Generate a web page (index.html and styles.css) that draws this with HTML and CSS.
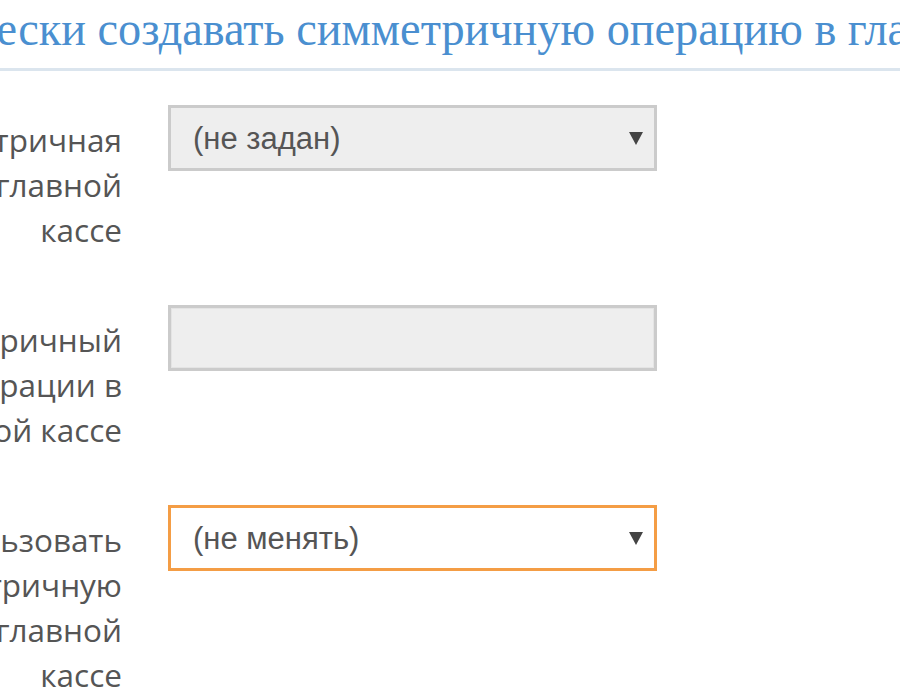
FILE: index.html
```html
<!DOCTYPE html>
<html lang="ru">
<head>
<meta charset="utf-8">
<title>Форма</title>
<link rel="stylesheet" href="styles.css">
</head>
<body>
<div class="page">
  <div class="header">
    <h1 class="title">Автоматически создавать симметричную операцию в главной кассе</h1>
  </div>
  <form class="form">
    <div class="row">
      <label class="label">Симметричная<br>операция в главной<br>кассе</label>
      <div class="control">
        <div class="select">
          <span class="value">(не задан)</span>
          <svg class="arrow" width="14" height="13" viewBox="0 0 14 13"><polygon points="0,0 14,0 7,13" fill="#444"/></svg>
        </div>
      </div>
    </div>
    <div class="row">
      <label class="label">Симметричный<br>номер операции в<br>главной кассе</label>
      <div class="control">
        <div class="input"></div>
      </div>
    </div>
    <div class="row">
      <label class="label">Использовать<br>симметричную<br>операцию в главной<br>кассе</label>
      <div class="control">
        <div class="select select-focus">
          <span class="value">(не менять)</span>
          <svg class="arrow" width="14" height="13" viewBox="0 0 14 13"><polygon points="0,0 14,0 7,13" fill="#444"/></svg>
        </div>
      </div>
    </div>
  </form>
</div>
</body>
</html>
```
FILE: styles.css
```css
html, body {
  margin: 0;
  padding: 0;
  background: #fff;
}
body {
  width: 900px;
  height: 700px;
  overflow: hidden;
}
.page {
  width: 900px;
}
.header {
  overflow: hidden;
  border-bottom: 3px solid #dbe5ee;
  padding: 1px 0 11px 0;
}
.title {
  margin: 0 0 0 -216px;
  white-space: nowrap;
  font-family: "Liberation Serif", "Times New Roman", serif;
  font-weight: normal;
  font-size: 48px;
  line-height: 56px;
  color: #4a8fd0;
  transform: scaleX(0.964);
  transform-origin: left center;
}
.form {
  padding-top: 34px;
}
.row {
  display: flex;
  align-items: flex-start;
  gap: 46px;
  margin-bottom: 53px;
}
.label {
  flex: 0 0 400px;
  margin-left: -278px;
  padding-top: 12px;
  text-align: right;
  font-family: "Open Sans", "DejaVu Sans", sans-serif;
  font-size: 31.5px;
  line-height: 45px;
  color: #555;
  white-space: nowrap;
}
.control {
  flex: 0 0 489px;
}
.select, .input {
  box-sizing: border-box;
  height: 66px;
  width: 489px;
  border: 3px solid #cbcbcb;
  background: #eeeeee;
}
.select {
  display: flex;
  align-items: center;
  justify-content: space-between;
  padding: 0 11px 0 22px;
  font-family: "Liberation Sans", Arial, sans-serif;
  font-size: 31px;
  color: #555;
}
.value {
  line-height: 1;
}
.arrow {
  display: block;
}
.input {
  box-shadow: inset 0 0 0 1px #e4e4e4;
}
.select-focus {
  background: #fff;
  border-color: #f49d45;
}
```
